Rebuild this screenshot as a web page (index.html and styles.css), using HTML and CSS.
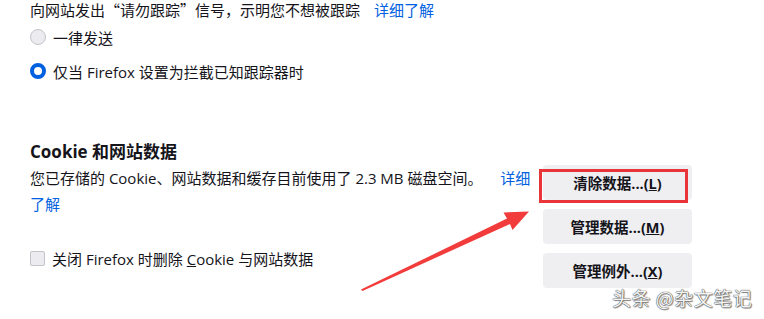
FILE: index.html
```html
<!DOCTYPE html>
<html lang="zh-CN">
<head>
<meta charset="utf-8">
<title>Cookie 和网站数据</title>
<link rel="stylesheet" href="styles.css">
</head>
<body>
<div class="page">
  <p class="intro">向网站发出<span class="q">“</span>请勿跟踪<span class="q">”</span>信号，示明您不想被跟踪 <a class="link" href="#">详细了解</a></p>
  <label class="choice first"><span class="radio"></span><span>一律发送</span></label>
  <label class="choice second"><span class="radio checked"></span><span>仅当 Firefox 设置为拦截已知跟踪器时</span></label>

  <h2 class="heading">Cookie 和网站数据</h2>
  <div class="cookie-row">
    <div class="cookie-left">
      <p class="desc">您已存储的 Cookie、网站数据和缓存目前使用了 2.3 MB 磁盘空间。 <a class="link" href="#">详细了解</a></p>
      <label class="choice check-row"><span class="checkbox"></span><span>关闭 Firefox 时删除 <u>C</u>ookie 与网站数据</span></label>
    </div>
    <div class="buttons">
      <button class="btn">清除数据...(<u>L</u>)</button>
      <button class="btn">管理数据...(<u>M</u>)</button>
      <button class="btn">管理例外...(<u>X</u>)</button>
    </div>
  </div>
</div>
<div class="highlight"></div>
<svg class="arrow" width="764" height="319" viewBox="0 0 764 319">
  <polygon points="361,289.5 507,218.6 503.5,212.5 529,211.5 512.5,230 510,224 362.5,291" fill="#f23b3b"/>
</svg>
<div class="watermark">头条 @杂文笔记</div>
</body>
</html>
```
FILE: styles.css
```css
html, body {
  margin: 0;
  padding: 0;
  background: #ffffff;
}
body {
  width: 764px;
  height: 319px;
  overflow: hidden;
  position: relative;
  font-family: "Open Sans", "Noto Sans CJK SC", sans-serif;
  font-size: 15px;
  color: #15141a;
}
.page {
  padding-left: 30px;
}
.intro {
  margin: 0;
  margin-top: -1px;
  line-height: 22px;
  white-space: nowrap;
}
.q {
  font-family: "Noto Sans CJK SC", sans-serif;
  font-feature-settings: "fwid";
}
.link {
  color: #0061e0;
  text-decoration: none;
  margin-left: 10px;
}
.choice {
  display: flex;
  align-items: center;
  gap: 7px;
  height: 24px;
}
.choice.first {
  margin-top: 4px;
}
.choice.second {
  margin-top: 10px;
}
.radio {
  width: 14px;
  height: 14px;
  border-radius: 50%;
  border: 1px solid #c3c3c9;
  background: #ececf0;
  flex: none;
}
.radio.checked {
  width: 8px;
  height: 8px;
  border: 4px solid #0061e0;
  background: #ffffff;
}
.heading {
  margin: 57px 0 0 0;
  font-size: 17px;
  font-weight: 700;
  line-height: 24px;
}
.cookie-row {
  display: flex;
  margin-top: 1px;
}
.cookie-left {
  width: 503px;
  flex: none;
}
.desc {
  margin: 0;
  line-height: 26px;
}
.desc .link {
  margin-left: 14px;
}
.check-row {
  margin-top: 29px;
}
.checkbox {
  width: 13px;
  height: 13px;
  border: 1px solid #c3c3c9;
  border-radius: 2px;
  background: #ececf0;
  flex: none;
}
.buttons {
  margin-left: 10px;
  display: flex;
  flex-direction: column;
  gap: 9px;
}
.btn {
  width: 149px;
  height: 35px;
  border: none;
  border-radius: 4px;
  background: #efeff2;
  font-family: "Open Sans", "Noto Sans CJK SC", sans-serif;
  font-size: 14.5px;
  font-weight: 700;
  color: #15141a;
  padding: 0;
}
.highlight {
  position: absolute;
  left: 539px;
  top: 169px;
  width: 143px;
  height: 28px;
  border: 3px solid #e8353a;
}
.arrow {
  position: absolute;
  left: 0;
  top: 0;
}
.watermark {
  position: absolute;
  left: 612px;
  top: 285px;
  font-family: "Noto Sans CJK SC", sans-serif;
  font-size: 19px;
  line-height: 26px;
  color: #f4f4f4;
  letter-spacing: 0.5px;
  text-shadow: 0 0 1px #444, 0 0 1px #444, 1px 1px 1px rgba(0,0,0,0.45);
}
```
